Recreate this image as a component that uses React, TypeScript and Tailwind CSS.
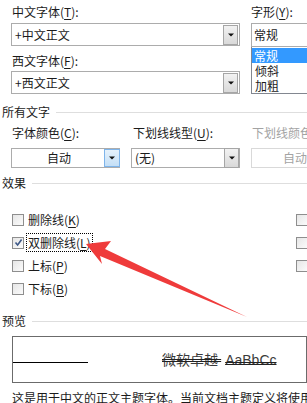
import React from 'react';

const U = ({ k }: { k: string }) => <span className="underline underline-offset-2">{k}</span>;

function Arrow() {
  return (
    <svg width="10" height="6" viewBox="0 0 10 6" className="block">
      <path d="M2 1.5 L8 1.5 L5 4.5 Z" fill="#111" />
    </svg>
  );
}

function DropButton({ blue }: { blue?: boolean }) {
  return (
    <div
      className={
        blue
          ? 'w-[16px] h-full flex items-center justify-center border border-[#7eb4ea] bg-gradient-to-b from-[#e5f1fb] to-[#c4dff6]'
          : 'w-[15px] h-[20px] flex items-center justify-center border border-[#a6a6a6] bg-gradient-to-b from-[#f2f2f2] to-[#d9d9d9]'
      }
    >
      <Arrow />
    </div>
  );
}

function Group({ title }: { title: string }) {
  return (
    <div className="flex items-center h-[14px] pl-[2px]">
      <span className="leading-[14px]">{title}</span>
      <div className="ml-[6px] flex-1 h-px bg-[#dedede]" />
    </div>
  );
}

function Box({ checked }: { checked?: boolean }) {
  return (
    <div className="w-[12px] h-[12px] shrink-0 border border-[#8e8e8e] bg-gradient-to-br from-[#e6e6e6] to-[#fbfbfb] flex items-center justify-center">
      {checked && (
        <svg width="9" height="9" viewBox="0 0 9 9">
          <path d="M1.5 4.5 L3.6 7 L7.6 1.5" stroke="#3d5887" strokeWidth="1.6" fill="none" />
        </svg>
      )}
    </div>
  );
}

const effects = [
  { label: '删除线', key: 'K', right: true },
  { label: '双删除线', key: 'L', right: true, checked: true, focus: true },
  { label: '上标', key: 'P', right: true },
  { label: '下标', key: 'B', right: false },
];

export default function App() {
  return (
    <div className="relative w-[307px] h-[403px] overflow-hidden bg-white text-[12px] text-[#1b1b1b] font-['Noto_Sans_CJK_SC','Microsoft_YaHei',sans-serif]">
      {/* fonts */}
      <div className="flex pl-[11px] gap-[11px]">
        <div className="w-[229px] shrink-0">
          <div className="h-[23px] flex items-center pl-[1px]">
            中文字体(<U k="T" />):
          </div>
          <div className="h-[23px] border border-[#acacac] flex items-center justify-between pl-[3px] pr-[1px]">
            <span>+中文正文</span>
            <DropButton />
          </div>
          <div className="h-[25px] flex items-center pt-[4px] pl-[1px]">
            西文字体(<U k="F" />):
          </div>
          <div className="h-[23px] border border-[#acacac] flex items-center justify-between pl-[3px] pr-[1px]">
            <span>+西文正文</span>
            <DropButton />
          </div>
        </div>
        <div className="w-[80px] shrink-0">
          <div className="h-[23px] flex items-center">
            字形(<U k="Y" />):
          </div>
          <div className="h-[24px] border border-[#acacac] flex items-center pl-[2px]">常规</div>
          <div className="h-[47px] border border-t-0 border-[#828790] pt-[1px] leading-[15px]">
            <div className="h-[15px] bg-[#3399ff] text-white pl-[2px]">常规</div>
            <div className="h-[15px] pl-[3px]">倾斜</div>
            <div className="h-[15px] pl-[3px]">加粗</div>
          </div>
        </div>
      </div>

      {/* all text */}
      <div className="mt-[11px]">
        <Group title="所有文字" />
      </div>
      <div className="mt-[7px] grid grid-cols-[109px_109px_109px] gap-x-[11px] pl-[11px]">
        <div className="h-[14px] leading-[14px] pl-[1px]">
          字体颜色(<U k="C" />):
        </div>
        <div className="h-[14px] leading-[14px] pl-[2px]">
          下划线线型(<U k="U" />):
        </div>
        <div className="h-[14px] leading-[14px] pl-[1px] text-[#a3a3a3] whitespace-nowrap">下划线颜色(I):</div>
        <div className="mt-[8px] h-[20px] border border-[#acacac] border-r-0 flex items-center">
          <span className="flex-1 text-center pl-[2px]">自动</span>
          <DropButton blue />
        </div>
        <div className="mt-[8px] h-[20px] border border-[#acacac] flex items-center justify-between pl-[3px]">
          <span>(无)</span>
          <div className="h-[18px] flex items-center">
            <DropButton />
          </div>
        </div>
        <div className="mt-[8px] h-[20px] border border-[#d9d9d9] flex items-center pl-[31px] text-[#a3a3a3]">
          自动
        </div>
      </div>

      {/* effects */}
      <div className="mt-[8px]">
        <Group title="效果" />
      </div>
      <div className="mt-[18px] flex flex-col">
        {effects.map(e => (
          <div key={e.label} className="h-[23px] flex items-center pl-[12px]">
            <div className="w-[284px] shrink-0 flex items-center gap-[2px]">
              <Box checked={e.checked} />
              <span
                className={
                  e.focus
                    ? 'px-[1px] h-[19px] leading-[17px] border border-dotted border-black'
                    : 'px-[2px] leading-[17px]'
                }
              >
                {e.label}(<U k={e.key} />)
              </span>
            </div>
            {e.right && <Box />}
          </div>
        ))}
      </div>

      {/* preview */}
      <div className="mt-[14px]">
        <Group title="预览" />
      </div>
      <div className="mt-[8px] ml-[12px] h-[47px] border border-[#6b6b6b] flex items-center">
        <div className="w-[75px] h-px bg-black mt-[6px]" />
        <div className="ml-[74px] text-[14px] text-[#3a3a3a] whitespace-nowrap line-through decoration-double decoration-[#222] font-['Noto_Sans_CJK_SC',sans-serif]">
          微软卓越 <span className="font-['Liberation_Sans',sans-serif] ml-[4px]">AaBbCc</span>
        </div>
      </div>
      <div className="mt-[8px] pl-[12px] h-[14px] leading-[14px] whitespace-nowrap">
        这是用于中文的正文主题字体。当前文档主题定义将使用哪种字体。
      </div>

      {/* annotation arrow */}
      <svg className="absolute left-0 top-0 pointer-events-none" width="307" height="403">
        <polygon
          points="86,244 111,241 105,249 247,317 100,256 102,264"
          fill="#ef3b3b"
        />
      </svg>
    </div>
  );
}
